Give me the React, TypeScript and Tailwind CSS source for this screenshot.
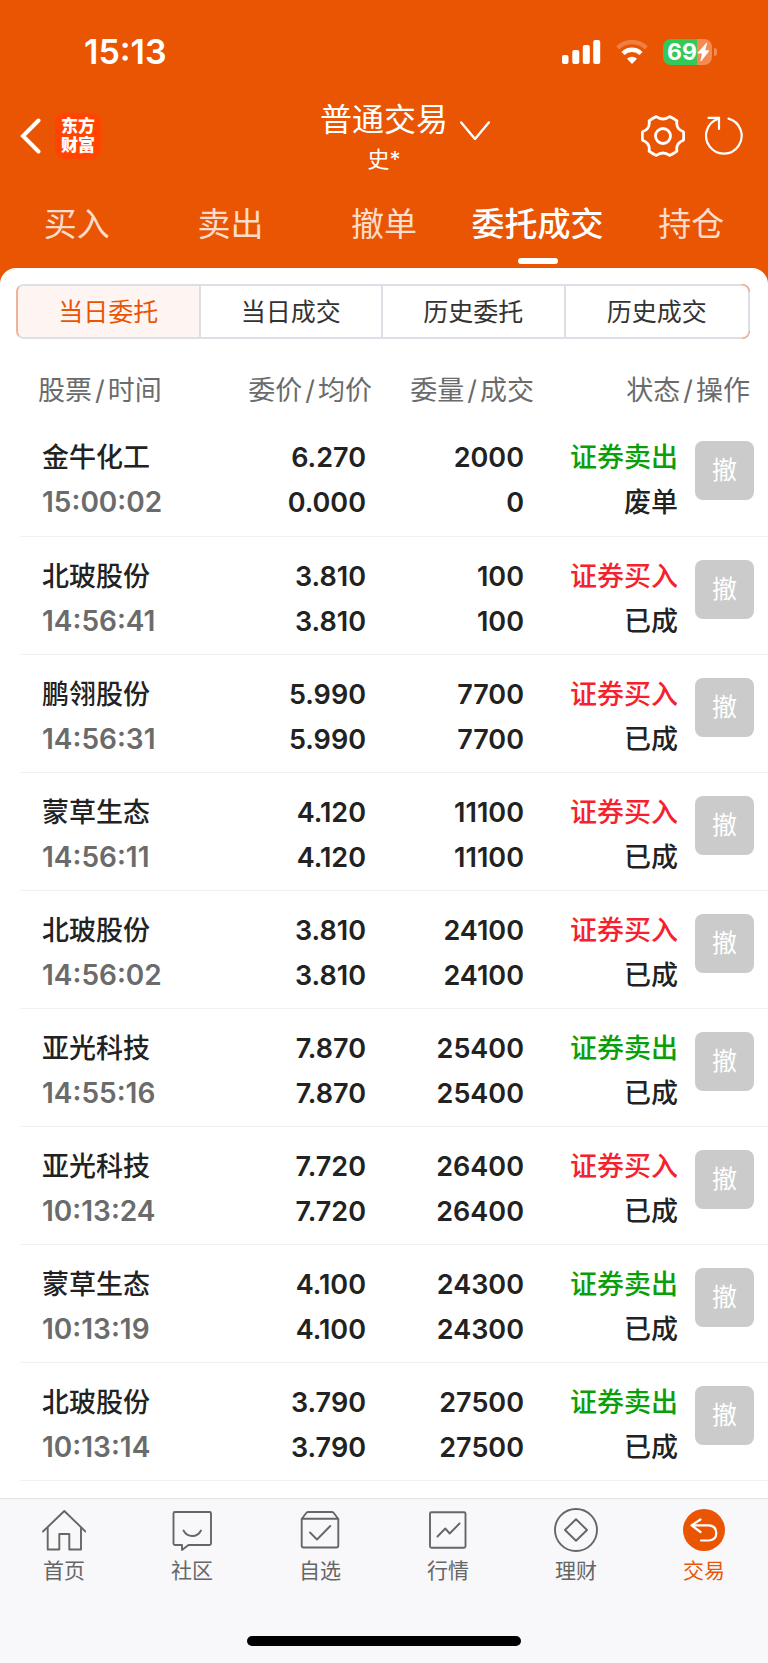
// App.tsx

// Purpose: Order list screen of the trading app (today's orders),
// with the header tabs on top and the main navigation at the bottom.

import { useState } from 'react';
import type { ReactNode } from 'react';

type Order = {
  name: string;
  time: string;
  price: string;
  avg: string;
  amount: string;
  done: string;
  side: 'buy' | 'sell';
  status: string;
};

const TABS = ['买入', '卖出', '撤单', '委托成交', '持仓'];
const SEGMENTS = ['当日委托', '当日成交', '历史委托', '历史成交'];

const ORDERS: Order[] = [
  { name: '金牛化工', time: '15:00:02', price: '6.270', avg: '0.000', amount: '2000', done: '0', side: 'sell', status: '废单' },
  { name: '北玻股份', time: '14:56:41', price: '3.810', avg: '3.810', amount: '100', done: '100', side: 'buy', status: '已成' },
  { name: '鹏翎股份', time: '14:56:31', price: '5.990', avg: '5.990', amount: '7700', done: '7700', side: 'buy', status: '已成' },
  { name: '蒙草生态', time: '14:56:11', price: '4.120', avg: '4.120', amount: '11100', done: '11100', side: 'buy', status: '已成' },
  { name: '北玻股份', time: '14:56:02', price: '3.810', avg: '3.810', amount: '24100', done: '24100', side: 'buy', status: '已成' },
  { name: '亚光科技', time: '14:55:16', price: '7.870', avg: '7.870', amount: '25400', done: '25400', side: 'sell', status: '已成' },
  { name: '亚光科技', time: '10:13:24', price: '7.720', avg: '7.720', amount: '26400', done: '26400', side: 'buy', status: '已成' },
  { name: '蒙草生态', time: '10:13:19', price: '4.100', avg: '4.100', amount: '24300', done: '24300', side: 'sell', status: '已成' },
  { name: '北玻股份', time: '10:13:14', price: '3.790', avg: '3.790', amount: '27500', done: '27500', side: 'sell', status: '已成' },
];

// Purpose: Clock, signal, wifi and battery.
function StatusBar() {
  return (
    <div className="flex items-center justify-between pt-8 pr-[51px] pl-[84px]">
      <span className="text-[34px] leading-10 font-semibold">15:13</span>
      <div className="flex items-center gap-[15px]">
        <svg width="39" height="24" viewBox="0 0 39 24" fill="#fff" aria-hidden="true">
          <rect x="0" y="15" width="6.5" height="9" rx="2" />
          <rect x="10.3" y="10" width="7" height="14" rx="2" />
          <rect x="20.8" y="5" width="7" height="19" rx="2" />
          <rect x="31.2" y="0" width="7" height="24" rx="2" />
        </svg>
        <svg width="32" height="24" viewBox="0 0 32 24" fill="none" aria-hidden="true">
          <path d="M1.8 7.8A20.5 20.5 0 0 1 30.2 7.8" stroke="#fff" strokeOpacity=".25" strokeWidth="4.4" />
          <path d="M7 13.5A12.8 12.8 0 0 1 25 13.5" stroke="#fff" strokeWidth="4.4" />
          <path d="M16 24l-5-5.2a7.2 7.2 0 0 1 10 0z" fill="#fff" />
        </svg>
        <div className="flex items-center gap-0.5">
          <div className="flex h-[26px] w-[49px] items-center rounded-lg bg-linear-to-r from-[#34c759] from-70% to-[#f38b52] to-70% pl-1">
            <span className="text-[23px] leading-6 font-bold">69</span>
            <svg width="13" height="20" viewBox="0 0 13 20" fill="#fff" aria-hidden="true">
              <path d="M9.5 0.8L0.8 10.6Q0.3 11.5 1.2 11.6H5L3.4 18.8Q3.6 19.7 4.4 19L12 9.3Q12.4 8.3 11.5 8.2H8.2L10.2 1.3Q10.2 0.4 9.5 0.8Z" />
            </svg>
          </div>
          <span className="h-2 w-[3px] rounded-r-full bg-[#f38b52]" />
        </div>
      </div>
    </div>
  );
}

// Purpose: Back button, account switcher and the two tools on the right.
function TitleBar() {
  return (
    <div className="mt-6 grid grid-cols-[1fr_auto_1fr] items-center px-5">
      <div className="flex items-center gap-3.5">
        <button type="button" aria-label="返回">
          <svg width="21" height="36" viewBox="0 0 21 36" fill="none" stroke="#fff" strokeWidth="4" strokeLinecap="round">
            <path d="M18.5 2.5L3 18L18.5 33.5" />
          </svg>
        </button>
        <div className="flex size-[46px] flex-col items-center justify-center rounded-[9px] bg-[#ff4400] text-[17px] leading-[19px] font-black">
          <span>东方</span>
          <span>财富</span>
        </div>
      </div>

      <button type="button" className="grid grid-cols-[30px_auto_30px] gap-x-3 gap-y-1 pt-1 pb-0.5">
        <span className="col-start-2 text-[32px] leading-10">普通交易</span>
        <svg className="self-end" width="30" height="20" viewBox="0 0 30 20" fill="none" stroke="#fff" strokeWidth="2.4" strokeLinecap="round" aria-hidden="true">
          <path d="M1.2 2.4L15 19L28.8 2.4" />
        </svg>
        <span className="col-start-2 text-[22px] leading-[30px]">史*</span>
      </button>

      <div className="flex items-center justify-end gap-5 pr-[5px]">
        <button type="button" aria-label="设置">
          <svg width="44" height="44" viewBox="0 0 44 44" fill="none" stroke="#fff" strokeWidth="2.8" strokeLinejoin="round">
            <path d="M42.4 17.8Q43 22 42.4 26.2Q34.6 29 35.9 37.2Q32.6 39.8 28.7 41.4Q22 36.6 15.3 41.4Q11.4 39.8 8.1 37.2Q9.4 29 1.6 26.2Q1 22 1.6 17.8Q9.4 15 8.1 6.8Q11.4 4.2 15.3 2.6Q22 7.4 28.7 2.6Q32.6 4.2 35.9 6.8Q34.6 15 42.4 17.8Z" />
            <circle cx="22" cy="22" r="7.5" />
          </svg>
        </button>
        <button type="button" aria-label="刷新">
          <svg width="38" height="40" viewBox="0 0 38 40" fill="none" stroke="#fff" strokeWidth="2.2" strokeLinecap="round">
            <path d="M23.5 2.6A17.8 17.8 0 1 1 13.5 2.8" />
            <path d="M3.5 1.8H14V13" />
          </svg>
        </button>
      </div>
    </div>
  );
}

// Column title made of two parts, "股票/时间"
function ColumnTitle({ first, second }: { first: string; second: string }) {
  return (
    <>
      {first}
      <span className="mx-[3px]">/</span>
      {second}
    </>
  );
}

function OrderRow({ order }: { order: Order }) {
  const sideColor = order.side === 'buy' ? 'text-[#f5222d]' : 'text-[#0a9f0a]';
  return (
    <tr className="h-[118px] border-b border-[#f1f1f3] align-top text-[27px] leading-[45px] font-medium text-[#222]">
      <td className="pt-[17px] pl-[22px]">
        <div>{order.name}</div>
        <div className="text-[28px] font-semibold text-[#6b6b6b]">{order.time}</div>
      </td>
      <td className="pt-[17px] pr-1.5 text-right font-semibold">
        <div>{order.price}</div>
        <div>{order.avg}</div>
      </td>
      <td className="pt-[17px] pr-2.5 text-right font-semibold">
        <div>{order.amount}</div>
        <div>{order.done}</div>
      </td>
      <td className="pt-[17px] text-right">
        <div className={sideColor}>{order.side === 'buy' ? '证券买入' : '证券卖出'}</div>
        <div>{order.status}</div>
      </td>
      <td className="pt-[23px] pr-3.5">
        <button type="button" className="ml-auto block size-[59px] rounded-lg bg-[#cbcbcb] text-[25px] leading-[59px] font-normal text-white">
          撤
        </button>
      </td>
    </tr>
  );
}

// Icons of the bottom navigation, all on a 44x44 grid
const NAV_ITEMS: { label: string; icon: ReactNode }[] = [
  {
    label: '首页',
    icon: (
      <>
        <path d="M1 23.5L22.3 3L43.5 23.5" />
        <path d="M5.7 20V41.5H17.3V26H27.3V41.5H39V20" />
      </>
    ),
  },
  {
    label: '社区',
    icon: (
      <>
        <path d="M5 4H39.5Q41 4 41 5.5V35.5Q41 37 39.5 37H18.5L12 42V37H5Q3.5 37 3.5 35.5V5.5Q3.5 4 5 4Z" />
        <path d="M13.5 22.5Q16.5 28 22.3 28T31 22.5" />
      </>
    ),
  },
  {
    label: '自选',
    icon: (
      <>
        <path d="M3.7 11L8 5.2Q8.8 4 10 4H34Q35.3 4 36 5.2L40.3 11V37.5Q40.3 39.5 38.3 39.5H5.7Q3.7 39.5 3.7 37.5ZM3.7 10.8H40.3" />
        <path d="M12 24.5L19 31.5L32.3 18" />
      </>
    ),
  },
  {
    label: '行情',
    icon: (
      <>
        <rect x="4" y="4.2" width="35.5" height="35.5" rx="1.5" />
        <path d="M11.5 28.5L19.3 20.5L23.7 25.5L33.5 15.5" />
      </>
    ),
  },
  {
    label: '理财',
    icon: (
      <>
        <circle cx="22" cy="22" r="21" />
        <path d="M22 11.2L33 22L22 32.8L11 22Z" />
      </>
    ),
  },
  {
    label: '交易',
    icon: (
      <>
        <circle cx="22" cy="22" r="21" fill="#ea5504" stroke="none" />
        <path d="M18.5 11.5L9.5 17.3L18.5 24M9.5 17.3H27Q34.3 18 34.3 25Q34.3 32 27 32.5H19" stroke="#fff" strokeWidth="2.2" />
      </>
    ),
  },
];

function BottomNav() {
  return (
    <footer className="border-t border-[#e2e2e6] bg-[#f8f8fa] pt-[9px] pb-[17px]">
      <nav className="grid grid-cols-6">
        {NAV_ITEMS.map((item) => (
          <a
            key={item.label}
            href="#"
            className={`flex flex-col items-center gap-1.5 text-[21px] leading-[26px] ${item.label === '交易' ? 'text-[#ea5504]' : 'text-[#666]'}`}
          >
            <svg width="44" height="44" viewBox="0 0 44 44" fill="none" stroke="currentColor" strokeWidth="1.9" strokeLinecap="round" strokeLinejoin="round" aria-hidden="true">
              {item.icon}
            </svg>
            {item.label}
          </a>
        ))}
      </nav>
      {/* Home indicator */}
      <div className="mx-auto mt-[52px] h-2.5 w-[274px] rounded-full bg-black" />
    </footer>
  );
}

export default function App() {
  const [tab, setTab] = useState('委托成交');
  const [segment, setSegment] = useState('当日委托');

  return (
    <div className="flex min-h-screen flex-col bg-[#ea5504] font-['Inter','Noto_Sans_CJK_SC',sans-serif]">
      <header className="text-white">
        <StatusBar />
        <TitleBar />
        <nav className="mt-7 grid grid-cols-5 pb-1">
          {TABS.map((item) => (
            <button key={item} type="button" onClick={() => setTab(item)} className="flex flex-col items-center gap-3.5">
              <span className={`text-[33px] leading-10 whitespace-nowrap ${item === tab ? 'font-medium' : 'text-[#fddcc9]'}`}>{item}</span>
              <span className={`h-1.5 w-10 rounded-full ${item === tab ? 'bg-white' : ''}`} />
            </button>
          ))}
        </nav>
      </header>

      <main className="flex-1 rounded-t-2xl bg-white pt-4 pb-[17px]">
        <div className="relative mr-[18px] ml-4">
          <div className="grid h-[55px] grid-cols-4 divide-x-2 divide-[#dcdfe5] overflow-hidden rounded-lg border-2 border-[#dcdfe5] border-l-[#eeb29a]">
            {SEGMENTS.map((item) => (
              <button
                key={item}
                type="button"
                onClick={() => setSegment(item)}
                className={`text-[25px] leading-8 ${item === segment ? 'bg-[#fef5f2] text-[#ea5504]' : 'text-[#333]'}`}
              >
                {item}
              </button>
            ))}
          </div>
          {/* Tinted corners at the right end */}
          <span className="absolute top-0 right-0 size-2 rounded-tr-lg border-t border-r border-[#eea283]" />
          <span className="absolute right-0 bottom-0 size-2 rounded-br-lg border-r border-b border-[#eea283]" />
        </div>

        <table className="-mt-px ml-5 w-[calc(100%-20px)] table-fixed">
          <colgroup>
            <col />
            <col className="w-[151px]" />
            <col className="w-[162px]" />
            <col className="w-[144px]" />
            <col className="w-[90px]" />
          </colgroup>
          <thead>
            <tr className="text-[27px] leading-[30px] text-[#6b6b6b]">
              <th className="pt-[38px] pb-3 pl-[18px] text-left font-normal"><ColumnTitle first="股票" second="时间" /></th>
              <th className="pt-[38px] pb-3 text-right font-normal"><ColumnTitle first="委价" second="均价" /></th>
              <th className="pt-[38px] pb-3 text-right font-normal"><ColumnTitle first="委量" second="成交" /></th>
              <th colSpan={2} className="pt-[38px] pr-[18px] pb-3 text-right font-normal"><ColumnTitle first="状态" second="操作" /></th>
            </tr>
          </thead>
          <tbody>
            {ORDERS.map((order) => (
              <OrderRow key={order.time} order={order} />
            ))}
          </tbody>
        </table>
      </main>

      <BottomNav />
    </div>
  );
}
